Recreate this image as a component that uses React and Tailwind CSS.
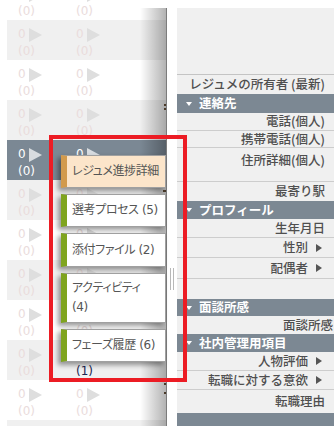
import React from "react";

function Tri({ dark }) {
  return (
    <span
      className={
        dark
          ? "ml-[3px] inline-block h-0 w-0 border-y-[7px] border-l-[13px] border-y-transparent border-l-[#d8dce0]"
          : "ml-[3px] inline-block h-0 w-0 border-y-[7px] border-l-[13px] border-y-transparent border-l-[#dedede]"
      }
    />
  );
}

function Cell({ dark, second = "(0)", secondDark }) {
  const tc = dark ? "text-white" : "text-[#eadcdc]";
  return (
    <div className="w-[58px] shrink-0 leading-[17px]">
      <div className={"flex items-center " + tc}>
        <span>0</span>
        <Tri dark={dark} />
      </div>
      <div className={secondDark ? "text-[#1c2550]" : tc}>{second}</div>
    </div>
  );
}

const rows = ["w", "g", "w", "g", "d", "g", "w", "g", "w", "s", "w", "g"];

function Row({ kind }) {
  const bg =
    kind === "d" ? "bg-[#7b8894]" : kind === "w" ? "bg-white" : "bg-[#f0f0f0]";
  return (
    <div className={"flex h-[40px] pl-[11px] pt-[6px] " + bg}>
      <Cell dark={kind === "d"} />
      <Cell dark={kind === "d"} second={kind === "s" ? "(1)" : "(0)"} secondDark={kind === "s"} />
    </div>
  );
}

function Card({ children, active, h }) {
  return (
    <div
      className={
        (active
          ? "border-l-[#d29a4c] bg-[#fce5ca] "
          : "border-l-[#7fa41f] bg-white ") +
        h +
        " flex items-center whitespace-nowrap border-y border-r border-l-[6px] border-y-[#a0a0a0] border-r-[#a0a0a0] pl-[5px] pr-[2px] text-[12px] leading-[19px] tracking-[-0.4px] text-[#555] shadow-[-3px_3px_5px_rgba(0,0,0,0.4)] [font-feature-settings:'palt']"
      }
    >
      <div>{children}</div>
    </div>
  );
}

function Label({ h, children, arrow, top, pr }) {
  return (
    <div
      className={
        h +
        " flex justify-end border-b border-[#cdcdcd] " +
        (top ? "items-start pt-[3px] " : "items-center ") +
        (pr || (arrow ? "pr-[12px]" : "pr-[9px]"))
      }
    >
      <span>{children}</span>
      {arrow && (
        <span className="ml-[8px] inline-block h-0 w-0 self-center border-y-[4px] border-l-[6px] border-y-transparent border-l-[#555]" />
      )}
    </div>
  );
}

function Header({ h, children }) {
  return (
    <div className={h + " flex items-center bg-[#7c8893] pl-[9px] text-[12.5px] font-bold text-white"}>
      <span className="mr-[7px] inline-block h-0 w-0 border-x-[3.5px] border-t-[4px] border-x-transparent border-t-white" />
      <span>{children}</span>
    </div>
  );
}

export default function App() {
  return (
    <div className="relative flex h-[426px] w-[334px] overflow-hidden bg-white font-['DejaVu_Sans','Noto_Sans_CJK_JP',sans-serif] text-[12px]">
      {/* left grid */}
      <div className="relative h-full w-[167px] shrink-0 overflow-hidden">
        <div className="mt-[-20px] pl-[7px]">
          {rows.map((k, i) => (
            <Row key={i} kind={k} />
          ))}
        </div>
        <div className="absolute bottom-0 right-0 top-[8px] w-[27px] border-r-[1.5px] border-r-[#7c7c7c] bg-linear-to-r from-black/0 to-black/30" />
        <span className="absolute left-[164px] top-[104px] h-[2px] w-[2px] bg-[#4a3a2a]" />
        <span className="absolute left-[164px] top-[108px] h-[2px] w-[2px] bg-[#4a3a2a]" />
        <span className="absolute left-[163px] top-[190px] h-[2px] w-[3px] bg-[#4a3a2a]" />
        <span className="absolute left-[164px] top-[383px] h-[2px] w-[2px] bg-[#4a3a2a]" />
        <span className="absolute left-[164px] top-[392px] h-[2px] w-[2px] bg-[#4a3a2a]" />
      </div>

      {/* splitter */}
      <div className="relative w-[10px] shrink-0">
        <div className="absolute left-[3px] top-[268px] h-[22px] w-[4px] border-x border-[#b8b8b8]" />
      </div>

      {/* right panel */}
      <div className="mt-[8px] flex flex-1 flex-col bg-[#f0f0f0] font-['Noto_Sans_CJK_JP',sans-serif] text-[12.5px] font-medium text-[#4f4f4f]">
        <div className="h-[67px] shrink-0 border-b border-[#c4c4c4]" />
        <div className="flex h-[19px] items-center justify-end pr-[9px]">レジュメの所有者 (最新)</div>
        <Header h="h-[19px]">連絡先</Header>
        <Label h="h-[18px]">電話(個人)</Label>
        <Label h="h-[17px]">携帯電話(個人)</Label>
        <Label h="h-[34px]" top>住所詳細(個人)</Label>
        <div className="flex h-[19px] items-center justify-end pr-[9px]">最寄り駅</div>
        <Header h="h-[18px]">プロフィール</Header>
        <Label h="h-[19px]">生年月日</Label>
        <Label h="h-[20px]" arrow>性別</Label>
        <Label h="h-[21px]" arrow>配偶者</Label>
        <div className="h-[20px]" />
        <Header h="h-[17px]">面談所感</Header>
        <div className="flex h-[18px] items-center justify-end pr-[1px]">面談所感</div>
        <Header h="h-[18px]">社内管理用項目</Header>
        <Label h="h-[19px]" arrow>人物評価</Label>
        <Label h="h-[19px]" arrow>転職に対する意欲</Label>
        <div className="flex h-[23px] items-center justify-end pr-[9px]">転職理由</div>
        <div className="flex-1 bg-[#7c8893]" />
      </div>

      {/* tab popup */}
      <div className="absolute left-[61px] top-[155px] z-20 flex w-[105px] flex-col gap-[6px] font-['DejaVu_Sans','Noto_Sans_CJK_JP',sans-serif]">
        <Card active h="h-[33px]">レジュメ進捗詳細</Card>
        <Card h="h-[33px]">選考プロセス (5)</Card>
        <Card h="h-[34px]">添付ファイル (2)</Card>
        <Card h="h-[50px]">
          <span className="block">アクティビティ</span>
          <span className="block">(4)</span>
        </Card>
        <Card h="h-[33px]">フェーズ履歴 (6)</Card>
      </div>

      {/* red annotation box */}
      <div className="pointer-events-none absolute left-[49px] top-[135px] z-30 h-[247px] w-[138px] border-[4px] border-[#ec1c24]" />
    </div>
  );
}
